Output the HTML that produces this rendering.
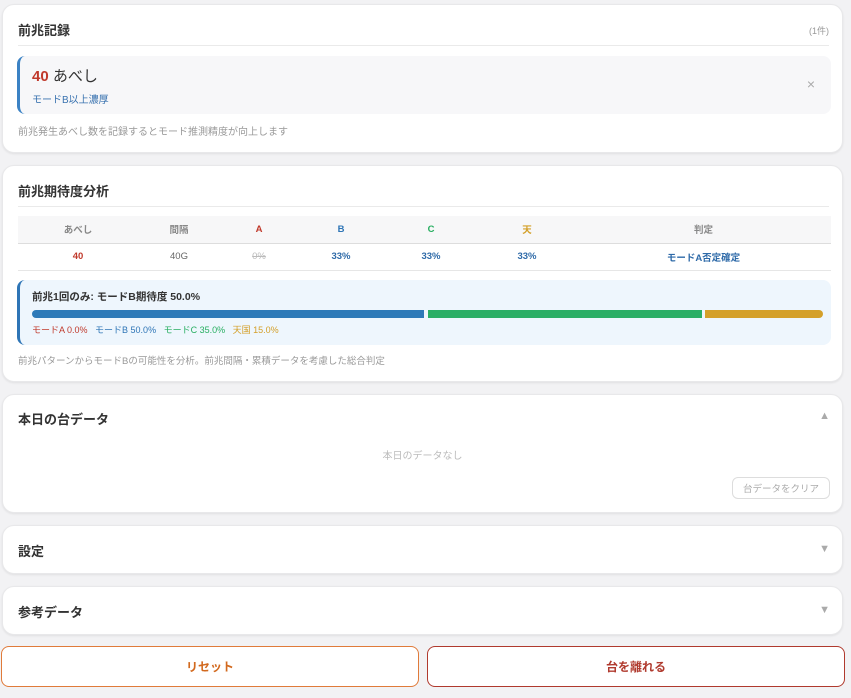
<!DOCTYPE html><html><head><meta charset="utf-8"><style>
*{box-sizing:border-box;margin:0;padding:0}
body{width:851px;height:698px;background:#f2f2f4;font-family:"Liberation Sans","Noto Sans CJK JP",sans-serif;position:relative;overflow:hidden;color:#333}
.card{position:absolute;left:2px;width:841px;background:#fff;border-radius:12px;box-shadow:0 1px 2px rgba(0,0,0,.08);border:1px solid #e8e8ea}
.t{position:absolute;left:15px;font-size:13px;font-weight:bold;color:#333}
.hr{position:absolute;left:15px;right:13px;height:1px;background:#eaeaea}
.sm{position:absolute;font-size:10px;color:#999}
.arrow{position:absolute;right:12px;font-size:11px;color:#aaa}
table{position:absolute;left:15px;width:813px;border-collapse:collapse;font-size:9.5px;text-align:center}
th{background:#f7f7f8;height:27px;color:#888;font-weight:bold;border-bottom:1px solid #ddd}
td{height:27px;border-bottom:1px solid #e6e6e6}
.btn{position:absolute;top:646px;height:41px;border-radius:8px;background:#fff;font-size:12px;font-weight:bold;display:flex;align-items:center;justify-content:center}
</style></head><body>
<div class="card" style="top:4px;height:149px">
<div class="t" style="top:15px">前兆記録</div>
<div class="sm" style="right:13px;top:19px;font-size:9px">(1件)</div>
<div class="hr" style="top:40px"></div>
<div style="position:absolute;left:14px;top:51px;width:814px;height:58px;background:#f7f7f9;border-radius:8px;border-left:3px solid #3b82c4">
<div style="position:absolute;left:12px;top:9px;font-size:15px"><b style="color:#c0392b">40</b> あべし</div>
<div style="position:absolute;left:12px;top:35px;font-size:10px;color:#3a73b0">モードB以上濃厚</div>
<div style="position:absolute;right:16px;top:20px;color:#aaa;font-size:14px">×</div>
</div>
<div class="sm" style="left:15px;top:118px">前兆発生あべし数を記録するとモード推測精度が向上します</div>
</div>
<div class="card" style="top:165px;height:217px">
<div class="t" style="top:15px">前兆期待度分析</div>
<div class="hr" style="top:40px"></div>
<table style="top:50px"><tr><th style="width:120px">あべし</th><th style="width:82px">間隔</th><th style="width:78px;color:#c0392b">A</th><th style="width:86px;color:#2e75b6">B</th><th style="width:94px;color:#27ae60">C</th><th style="width:98px;color:#d4a02a">天</th><th>判定</th></tr>
<tr><td style="color:#c0392b;font-weight:bold">40</td><td style="color:#666">40G</td><td style="color:#bbb;text-decoration:line-through">0%</td><td style="color:#2e6aa8;font-weight:bold">33%</td><td style="color:#2e6aa8;font-weight:bold">33%</td><td style="color:#2e6aa8;font-weight:bold">33%</td><td style="color:#2e6aa8;font-weight:bold">モードA否定確定</td></tr></table>
<div style="position:absolute;left:14px;top:114px;width:814px;height:65px;background:#eef6fd;border-radius:8px;border-left:3px solid #2e75b6">
<div style="position:absolute;left:12px;top:9px;font-size:10.5px;font-weight:bold;color:#333">前兆1回のみ: モードB期待度 50.0%</div>
<div style="position:absolute;left:12px;top:30px;width:392px;height:8px;background:#2e7ab8;border-radius:4px 0 0 4px"></div>
<div style="position:absolute;left:408px;top:30px;width:274px;height:8px;background:#2bae66"></div>
<div style="position:absolute;left:685px;top:30px;width:118px;height:8px;background:#d4a02a;border-radius:0 4px 4px 0"></div>
<div style="position:absolute;left:12px;top:43px;font-size:9px;white-space:nowrap"><span style="color:#c0392b">モードA 0.0%</span>&nbsp;&nbsp; <span style="color:#2e75b6">モードB 50.0%</span>&nbsp;&nbsp; <span style="color:#27ae60">モードC 35.0%</span>&nbsp;&nbsp; <span style="color:#d4a02a">天国 15.0%</span></div>
</div>
<div class="sm" style="left:15px;top:187px;font-size:9.5px">前兆パターンからモードBの可能性を分析。前兆間隔・累積データを考慮した総合判定</div>
</div>
<div class="card" style="top:394px;height:119px">
<div class="t" style="top:14px">本日の台データ</div>
<div class="arrow" style="top:15px">▲</div>
<div class="sm" style="left:0;right:0;text-align:center;top:52px;color:#bbb">本日のデータなし</div>
<div style="position:absolute;left:729px;top:82px;width:98px;height:22px;border:1px solid #ddd;border-radius:6px;font-size:9.5px;color:#aaa;display:flex;align-items:center;justify-content:center">台データをクリア</div>
</div>
<div class="card" style="top:525px;height:49px"><div class="t" style="top:15px">設定</div><div class="arrow" style="top:17px">▼</div></div>
<div class="card" style="top:586px;height:49px"><div class="t" style="top:15px">参考データ</div><div class="arrow" style="top:17px">▼</div></div>
<div class="btn" style="left:1px;width:418px;border:1px solid #e07b3a;color:#d2691e">リセット</div>
<div class="btn" style="left:427px;width:418px;border:1px solid #b03a2e;color:#b03a2e">台を離れる</div>
</body></html>
